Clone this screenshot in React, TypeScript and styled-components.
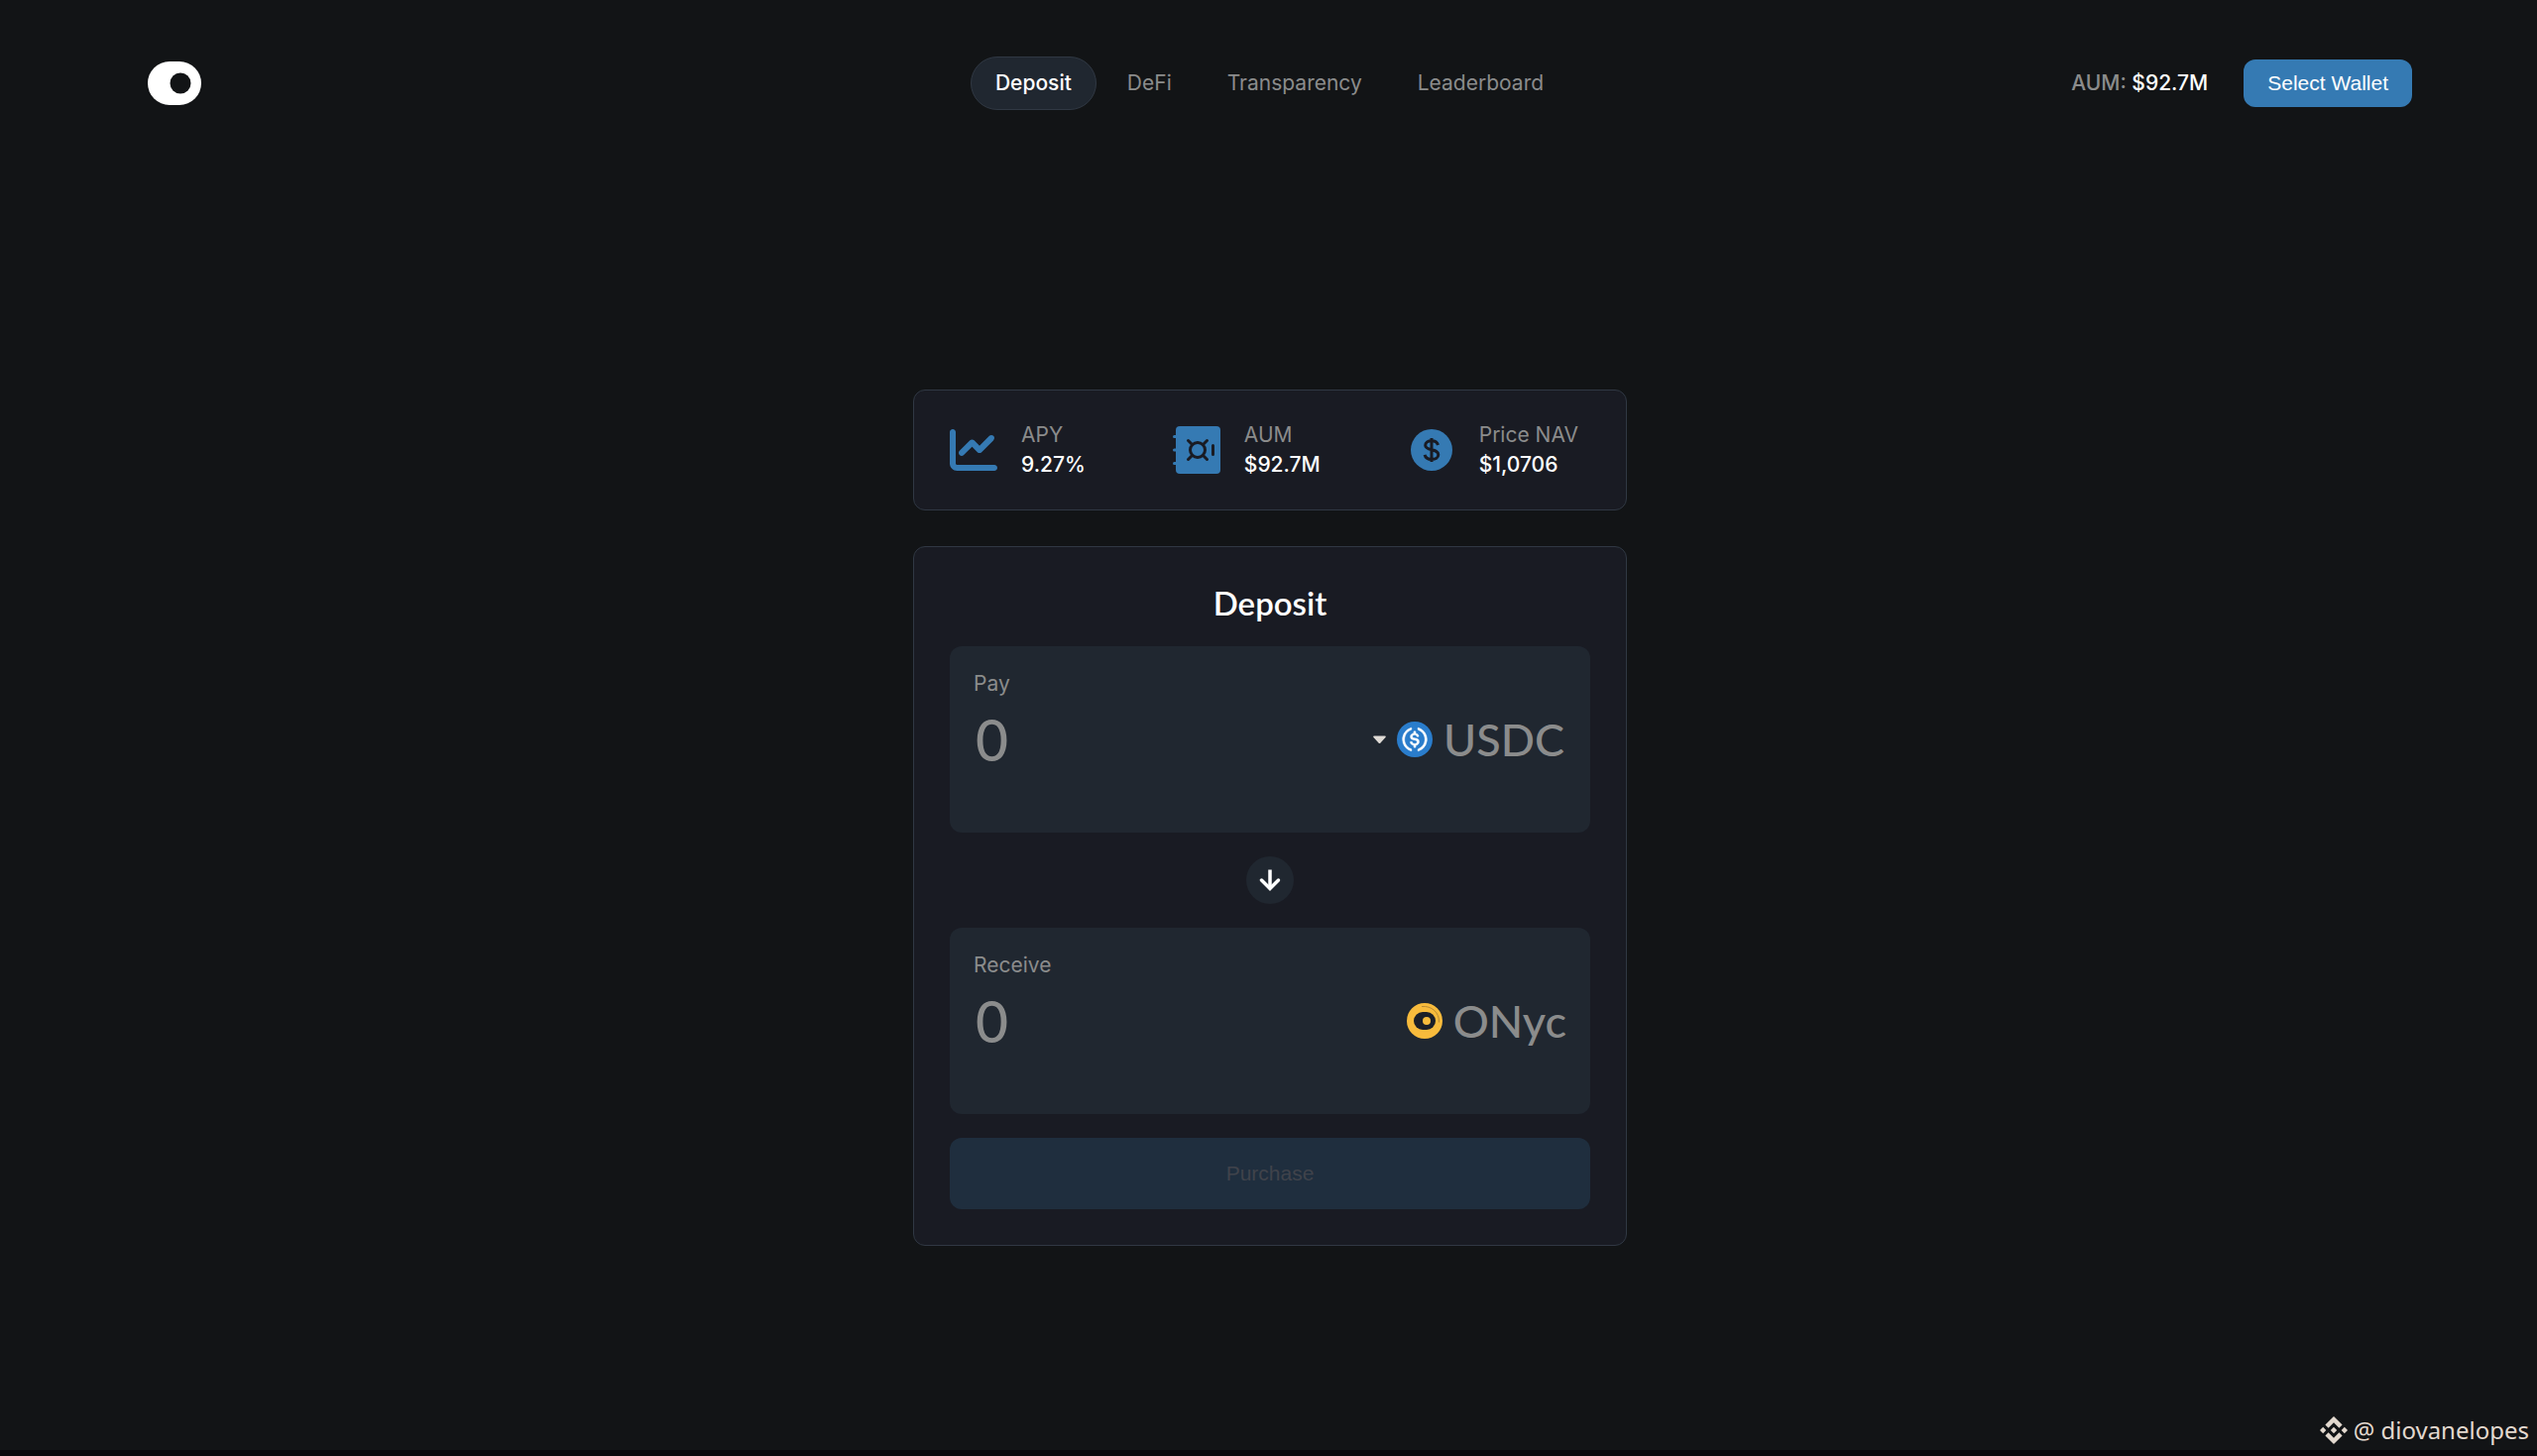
import React, { useState } from "react";
import styled, { createGlobalStyle } from "styled-components";
import { FaChartLine } from "react-icons/fa6";

const color = {
  page: "#121416",
  card: "#191b23",
  field: "#202730",
  line: "#303843",
  accent: "#357ab3",
  muted: "#8b8c8c",
  white: "#ffffff",
};

const body = `Inter, "Liberation Sans", sans-serif`;
const display = `Lato, "Open Sans", sans-serif`;
const control = `"Liberation Sans", Arial, sans-serif`;

const GlobalStyle = createGlobalStyle`
  *, *::before, *::after { box-sizing: border-box; }
  body {
    margin: 0;
    background: ${color.page};
    color: ${color.white};
    font-family: ${body};
    font-size: 21px;
    line-height: 30px;
  }
`;

const Page = styled.div`
  min-height: 100vh;
  display: flex;
  flex-direction: column;
`;

const Header = styled.header`
  display: grid;
  grid-template-columns: 1fr auto 1fr;
  align-items: center;
  padding: 57px 126px 0 149px;
`;

const Home = styled.a`
  display: flex;
  justify-self: start;
`;

const Nav = styled.nav`
  display: flex;
  gap: 6px;
  margin-right: 21px;
`;

const NavLink = styled.a<{ $active?: boolean }>`
  padding: 11px 24px;
  border: 1px solid ${(p) => (p.$active ? color.line : "transparent")};
  border-radius: 27px;
  background: ${(p) => (p.$active ? color.field : "transparent")};
  color: ${(p) => (p.$active ? color.white : color.muted)};
  font-weight: ${(p) => (p.$active ? 500 : 400)};
  text-decoration: none;
`;

const Account = styled.div`
  display: flex;
  align-items: center;
  justify-self: end;
  gap: 36px;
  color: ${color.muted};
  font-weight: 500;
  strong {
    color: ${color.white};
    font-weight: 500;
  }
`;

const Button = styled.button<{ $wide?: boolean }>`
  height: ${(p) => (p.$wide ? "72px" : "48px")};
  padding: 0 24px;
  border: 0;
  border-radius: 12px;
  background: ${color.accent};
  color: ${color.white};
  font-family: ${control};
  font-size: 21px;
  &:disabled {
    background: #1f2e3e;
    color: #40434b;
  }
`;

const Content = styled.div`
  flex: 1;
  padding: 282px 0 36px 3px;
`;

const Main = styled.main`
  display: flex;
  flex-direction: column;
  gap: 36px;
  max-width: 720px;
  margin: 0 auto;
`;

const Card = styled.section`
  border: 1px solid ${color.line};
  border-radius: 12px;
  background: ${color.card};
  padding: 30px 36px;
`;

const StatsCard = styled(Card)`
  display: flex;
  gap: 88px;
`;

const Stat = styled.div`
  display: flex;
  align-items: center;
  gap: 24px;
  color: ${color.accent};
`;

const StatText = styled.dl`
  margin: 0;
  dt {
    color: ${color.muted};
  }
  dd {
    margin: 0;
    color: ${color.white};
    font-weight: 500;
  }
`;

const FormCard = styled(Card).attrs({ as: "form" })`
  display: flex;
  flex-direction: column;
  gap: 24px;
  padding: 36px;
`;

const Title = styled.h1`
  margin: 0;
  font-family: ${display};
  font-size: 33px;
  line-height: 40px;
  font-weight: 600;
  text-align: center;
`;

const Field = styled.div`
  display: flex;
  flex-direction: column;
  gap: 12px;
  min-height: 188px;
  padding: 24px;
  border-radius: 12px;
  background: ${color.field};
  label {
    color: ${color.muted};
    line-height: 28px;
  }
`;

const FieldRow = styled.div`
  display: flex;
  align-items: center;
  gap: 12px;
`;

const Amount = styled.input`
  flex: 1;
  min-width: 0;
  height: 60px;
  padding: 0 2px;
  border: 0;
  outline: 0;
  background: transparent;
  color: ${color.white};
  font-family: ${display};
  font-size: 57px;
  font-weight: 500;
  &::placeholder {
    color: ${color.muted};
    opacity: 1;
  }
`;

const Token = styled.div`
  display: flex;
  align-items: center;
  gap: 11px;
  color: ${color.muted};
  font-family: ${display};
  font-size: 45px;
  font-weight: 500;
  line-height: 60px;
`;

const TokenSelect = styled.select`
  appearance: none;
  padding: 0 2px 0 0;
  border: 0;
  outline: 0;
  background: transparent;
  color: inherit;
  font: inherit;
  height: 60px;
`;

const Swap = styled.button`
  display: flex;
  align-items: center;
  justify-content: center;
  align-self: center;
  width: 48px;
  height: 48px;
  padding: 0;
  border: 0;
  border-radius: 50%;
  background: ${color.field};
`;

const Credit = styled.footer`
  display: flex;
  align-items: center;
  justify-content: flex-end;
  gap: 6px;
  padding: 0 8px 4px;
  border-bottom: 6px solid #0c070d;
  color: #e3d9cf;
  font-family: "Noto Sans", sans-serif;
  font-size: 24px;
  line-height: 32px;
`;

const Logo = () => (
  <svg width="54" height="44" viewBox="0 0 54 44" aria-hidden="true">
    <rect width="54" height="44" rx="22" fill="#fff" />
    <circle cx="33" cy="22" r="10.5" fill={color.page} />
  </svg>
);

const VaultIcon = () => (
  <svg width="48" height="48" viewBox="0 0 48 48" aria-hidden="true">
    <rect x="3" width="45" height="48" rx="4" fill="currentColor" />
    <path d="M1.5 10.5H5M1.5 24H5M1.5 37.5H5" stroke="currentColor" strokeWidth="3" strokeLinecap="round" />
    <g fill="none" stroke={color.card} strokeWidth="3" strokeLinecap="round">
      <circle cx="25" cy="24" r="7.5" />
      <path d="M15.5 14.5l4 4M34.5 14.5l-4 4M15.5 33.5l4-4M34.5 33.5l-4-4M40.5 19.5v9" />
    </g>
  </svg>
);

const DollarIcon = () => (
  <svg width="48" height="48" viewBox="0 0 48 48" aria-hidden="true">
    <circle cx="24" cy="24" r="21" fill="currentColor" />
    <path
      d="M30.5 19c-.8-2.8-3.2-4.2-6.5-4.2-3.6 0-6.3 1.7-6.3 4.5 0 6.2 13.1 2.8 13.1 9.4 0 3-2.9 4.7-6.7 4.7-3.6 0-6.3-1.6-7-4.6M24 12v24"
      fill="none"
      stroke={color.card}
      strokeWidth="3"
    />
  </svg>
);

const ArrowIcon = () => (
  <svg width="24" height="24" viewBox="0 0 24 24" fill="none" stroke="#fff" strokeWidth="3.5" aria-hidden="true">
    <path d="M12 1.500V20" />
    <path d="M3.500 12L12 20.500L20.500 12" strokeLinecap="round" />
  </svg>
);

const CaretIcon = () => (
  <svg width="13" height="9" viewBox="0 0 13 9" aria-hidden="true">
    <path d="M1 .5h11c1 0 1 1 .5 1.500L7.500 7.500c-.6.700-1.400.7-2 0L.5 2C0 1.500 0 .5 1 .5z" fill="#dedad5" />
  </svg>
);

const UsdcIcon = () => (
  <svg width="36" height="36" viewBox="0 0 32 32" aria-hidden="true">
    <circle cx="16" cy="16" r="16" fill="#2a7dcc" />
    <g fill="#fff" stroke="#fff" strokeWidth="0.4">
      <path d="M20.022 18.124c0-2.124-1.28-2.852-3.84-3.156-1.828-.243-2.193-.728-2.193-1.578 0-.85.61-1.396 1.828-1.396 1.097 0 1.707.364 2.011 1.275a.458.458 0 00.427.303h.975a.416.416 0 00.427-.425v-.06a3.04 3.04 0 00-2.743-2.489V9.142c0-.243-.183-.425-.487-.486h-.915c-.243 0-.426.182-.487.486v1.396c-1.829.242-2.986 1.456-2.986 2.974 0 2.002 1.218 2.791 3.778 3.095 1.707.303 2.255.668 2.255 1.639 0 .97-.853 1.638-2.011 1.638-1.585 0-2.133-.667-2.316-1.578-.06-.242-.244-.364-.427-.364h-1.036a.416.416 0 00-.426.425v.06c.243 1.518 1.219 2.61 3.23 2.914v1.457c0 .242.183.425.487.485h.915c.243 0 .426-.182.487-.485V21.34c1.829-.303 3.047-1.578 3.047-3.217z" />
      <path d="M12.892 24.497c-4.754-1.7-7.192-6.98-5.424-11.653.914-2.55 2.925-4.491 5.424-5.402.244-.121.365-.303.365-.607v-.85c0-.242-.121-.424-.365-.485-.061 0-.183 0-.244.06a10.895 10.895 0 00-7.13 13.717c1.096 3.4 3.717 6.01 7.13 7.102.244.121.488 0 .548-.243.061-.06.061-.122.061-.243v-.85c0-.182-.182-.424-.365-.546zm6.46-18.936c-.244-.122-.488 0-.548.242-.061.061-.061.122-.061.243v.85c0 .243.182.485.365.607 4.754 1.7 7.192 6.98 5.424 11.653-.914 2.55-2.925 4.491-5.424 5.402-.244.121-.365.303-.365.607v.85c0 .242.121.424.365.485.061 0 .183 0 .244-.06a10.895 10.895 0 007.13-13.717c-1.096-3.46-3.778-6.07-7.13-7.162z" />
    </g>
  </svg>
);

const OnycIcon = () => (
  <svg width="36" height="36" viewBox="0 0 36 36" aria-hidden="true">
    <circle cx="18" cy="18" r="18" fill="#f8bb3c" />
    <path d="M15 3.500c10-1 18 6 17.500 16" fill="none" stroke="#b98b34" strokeWidth="1" />
    <rect x="7" y="9" width="22" height="18" rx="9" fill="#1c1f28" />
    <circle cx="20" cy="18" r="4" fill="#f8bb3c" />
  </svg>
);

const BinanceIcon = () => (
  <svg width="28" height="28" viewBox="0 0 28 28" fill="currentColor" aria-hidden="true">
    <path d="M8.600 11.700L14 6.300l5.400 5.400 3.200-3.200L14 0 5.400 8.500zM0 14l3.200-3.200L6.300 14l-3.100 3.200zM8.600 16.300L14 21.700l5.400-5.400 3.200 3.200L14 28l-8.600-8.500zM21.700 14l3.100-3.200L28 14l-3.200 3.200zM10.800 14L14 10.800l3.200 3.200-3.200 3.200z" />
  </svg>
);

const links = ["Deposit", "DeFi", "Transparency", "Leaderboard"];

const stats = [
  { label: "APY", value: "9.27%", icon: <FaChartLine size={48} /> },
  { label: "AUM", value: "$92.7M", icon: <VaultIcon /> },
  { label: "Price NAV", value: "$1,0706", icon: <DollarIcon /> },
];

export default function App() {
  const [pay, setPay] = useState("");

  return (
    <Page>
      <GlobalStyle />
      <Header>
        <Home href="#" aria-label="Home">
          <Logo />
        </Home>
        <Nav>
          {links.map((name, i) => (
            <NavLink key={name} href={`#${name.toLowerCase()}`} $active={i === 0}>
              {name}
            </NavLink>
          ))}
        </Nav>
        <Account>
          <span>
            AUM: <strong>$92.7M</strong>
          </span>
          <Button type="button">Select Wallet</Button>
        </Account>
      </Header>

      <Content>
        <Main>
          <StatsCard>
            {stats.map((s) => (
              <Stat key={s.label}>
                {s.icon}
                <StatText>
                  <dt>{s.label}</dt>
                  <dd>{s.value}</dd>
                </StatText>
              </Stat>
            ))}
          </StatsCard>

          <FormCard>
            <Title>Deposit</Title>
            <Field>
              <label htmlFor="pay">Pay</label>
              <FieldRow>
                <Amount id="pay" placeholder="0" value={pay} onChange={(e) => setPay(e.target.value)} />
                <Token>
                  <CaretIcon />
                  <UsdcIcon />
                  <TokenSelect aria-label="Token to pay with">
                    <option>USDC</option>
                  </TokenSelect>
                </Token>
              </FieldRow>
            </Field>
            <Swap type="button" aria-label="Swap direction">
              <ArrowIcon />
            </Swap>
            <Field>
              <label htmlFor="receive">Receive</label>
              <FieldRow>
                <Amount id="receive" placeholder="0" readOnly />
                <Token>
                  <OnycIcon />
                  <span>ONyc</span>
                </Token>
              </FieldRow>
            </Field>
            <Button $wide type="submit" disabled>
              Purchase
            </Button>
          </FormCard>
        </Main>
      </Content>

      <Credit>
        <BinanceIcon />
        <span>@ diovanelopes</span>
      </Credit>
    </Page>
  );
}
